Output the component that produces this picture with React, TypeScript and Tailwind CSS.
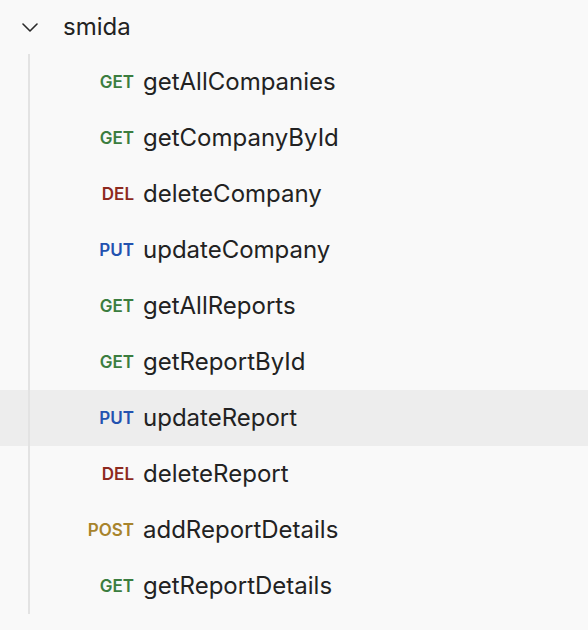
import React from "react";

type Item = { m: "GET" | "DEL" | "PUT" | "POST"; name: string; active?: boolean };

const items: Item[] = [
  { m: "GET", name: "getAllCompanies" },
  { m: "GET", name: "getCompanyById" },
  { m: "DEL", name: "deleteCompany" },
  { m: "PUT", name: "updateCompany" },
  { m: "GET", name: "getAllReports" },
  { m: "GET", name: "getReportById" },
  { m: "PUT", name: "updateReport", active: true },
  { m: "DEL", name: "deleteReport" },
  { m: "POST", name: "addReportDetails" },
  { m: "GET", name: "getReportDetails" },
];

const color: Record<Item["m"], string> = {
  GET: "text-[#3b7d3f]",
  DEL: "text-[#8e2a1e]",
  PUT: "text-[#2352b0]",
  POST: "text-[#a8842c]",
};

export default function App() {
  return (
    <div
      className="w-[588px] h-[630px] bg-[#f9f9f9] text-[#222222] overflow-hidden"
      style={{ fontFamily: "Inter, 'Noto Sans', sans-serif" }}
    >
      <div className="h-[54px] flex items-center">
        <div className="w-[22px]" />
        <svg width="16" height="9" viewBox="0 0 16 9" fill="none">
          <path d="M1 1 L8 8 L15 1" stroke="#2a2a2a" strokeWidth="1.6" strokeLinecap="round" strokeLinejoin="round" />
        </svg>
        <span className="ml-[25px] text-[24px] leading-none">smida</span>
      </div>
      <div className="flex flex-col">
        {items.map((it) => (
          <div
            key={it.name}
            className={`flex h-[56px] items-stretch ${it.active ? "bg-[#ededed]" : ""}`}
          >
            <div className="w-[28px]" />
            <div className="w-[2px] bg-[#e3e3e3]" />
            <div className="flex items-center">
              <span
                className={`w-[104px] text-right text-[17px] font-semibold leading-none ${color[it.m]}`}
              >
                {it.m}
              </span>
              <span className="ml-[9px] text-[24px] leading-none">{it.name}</span>
            </div>
          </div>
        ))}
      </div>
    </div>
  );
}
